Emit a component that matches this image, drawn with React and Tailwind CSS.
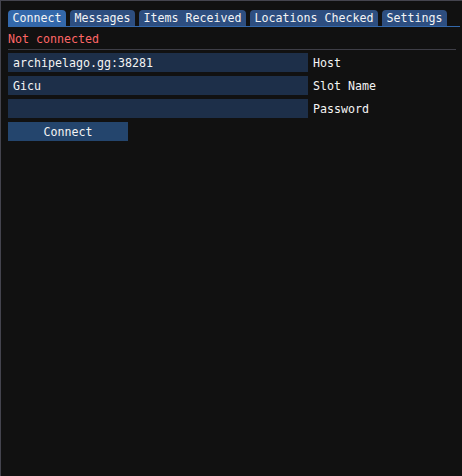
import React from "react";

const tabs = [
  { label: "Connect", w: "w-[58px]", active: true },
  { label: "Messages", w: "w-[65px]" },
  { label: "Items Received", w: "w-[107px]" },
  { label: "Locations Checked", w: "w-[128px]" },
  { label: "Settings", w: "w-[65px]" },
];

const fields = [
  { value: "archipelago.gg:38281", label: "Host" },
  { value: "Gicu", label: "Slot Name" },
  { value: "", label: "Password" },
];

export default function App() {
  return (
    <div
      className="w-[462px] h-[476px] overflow-hidden bg-[#111111] border-t border-l border-[#44444e] text-[#f4f4f4] text-[11.63px] leading-[13px]"
      style={{ fontFamily: '"DejaVu Sans Mono", "Liberation Mono", monospace' }}
    >
      <div className="pl-[7px] pt-[9px]">
        {/* tab bar */}
        <div className="flex gap-[4px] h-[16px]">
          {tabs.map((t) => (
            <div
              key={t.label}
              className={`${t.w} h-[16px] rounded-t-[4px] flex items-center justify-center pt-[1px] ${
                t.active ? "bg-[#3368ab]" : "bg-[#2d4e80]"
              }`}
            >
              {t.label}
            </div>
          ))}
        </div>
        <div className="w-[452px] h-[1px] bg-[#3368ab]" />

        <div className="mt-[6px] h-[13px] text-[#ff6666] flex items-center">Not connected</div>

        <div className="mt-[3px] w-[448px] h-[1px] bg-[#3e3e47]" />

        <div className="mt-[3px] flex flex-col gap-[4px]">
          {fields.map((f) => (
            <div key={f.label} className="flex items-center h-[19px]">
              <div className="w-[300px] h-[19px] bg-[#1d2f49] flex items-center pl-[5px] pt-[1px]">
                {f.value}
              </div>
              <div className="ml-[5px] pt-[1px]">{f.label}</div>
            </div>
          ))}
          <div className="w-[120px] h-[19px] bg-[#24456d] flex items-center justify-center pt-[1px]">
            Connect
          </div>
        </div>
      </div>
    </div>
  );
}
